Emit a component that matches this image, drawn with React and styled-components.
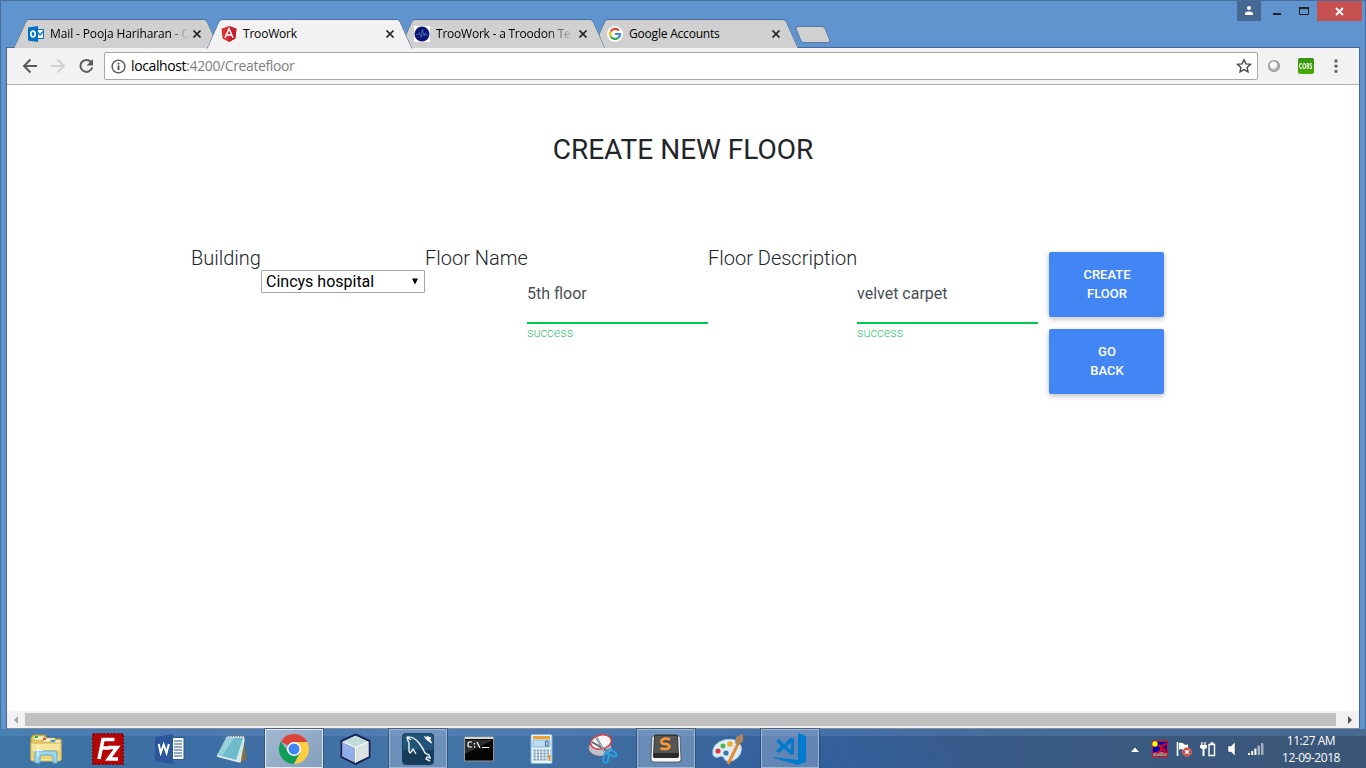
import React from 'react';
import styled, { createGlobalStyle, css } from 'styled-components';

const GlobalStyle = createGlobalStyle`
  * { box-sizing: border-box; }
  body { margin: 0; overflow: hidden; }
  svg { display: block; flex: none; }
`;

const uiFont = css`font-family: "Open Sans", "Noto Sans", sans-serif;`;

const Desktop = styled.div`
  width: 1366px;
  height: 768px;
  display: flex;
  flex-direction: column;
  overflow: hidden;
`;

const Window = styled.div`
  height: 729px;
  flex: none;
  display: flex;
  flex-direction: column;
  background: #6094cf;
  border: 1px solid #456f9f;
  border-bottom: 0;
`;

const TitleBar = styled.header`
  height: 46px;
  display: flex;
  justify-content: space-between;
  align-items: flex-start;
  padding: 0 3px 0 13px;
`;

const TabStrip = styled.div`
  display: flex;
  padding-top: 18px;
`;

const TabBox = styled.div`
  position: relative;
  z-index: ${p => p.$level};
  width: 205px;
  height: 29px;
  margin-right: -12px;
  padding: 1px 17px 0 14px;
  display: flex;
  align-items: center;
  ${uiFont}
  font-size: 12px;
  color: #000;
  &::before, &::after {
    content: "";
    position: absolute;
    z-index: -1;
    top: 0;
    height: ${p => (p.$active ? 29 : 28)}px;
    background: ${p => (p.$active ? '#f2f2f2' : '#d0d0d0')};
    border-top: 1px solid #4b6f99;
  }
  &::before {
    left: 6px;
    width: 100px;
    transform: skewX(-24deg);
    border-left: 1px solid #5b7595;
    border-top-left-radius: 3px;
  }
  &::after {
    right: 6px;
    width: 110px;
    transform: skewX(24deg);
    border-right: 1px solid #5b7595;
    border-top-right-radius: 3px;
  }
`;

const TabTitle = styled.span`
  flex: 1;
  margin-left: 6px;
  height: 18px;
  line-height: 18px;
  white-space: nowrap;
  letter-spacing: ${p => p.$tracking}px;
  ${p => p.$fade && css`mask-image: linear-gradient(90deg, #000 ${p.$fade[0]}px, transparent ${p.$fade[1]}px);`}
`;

const NewTab = styled.div`
  width: 30px;
  height: 17px;
  margin: 7px 0 0 12px;
  background: #d0d0d0;
  border: 1px solid #587aa3;
  border-radius: 3px;
  transform: skewX(22deg);
`;

const WindowControls = styled.div`
  display: flex;
  height: 20px;
`;

const Control = styled.div`
  width: ${p => p.$width}px;
  height: 20px;
  display: flex;
  align-items: center;
  justify-content: center;
  background: ${p => p.$fill || 'transparent'};
`;

const CloseControl = styled(Control)`
  margin-left: 2px;
`;

const Client = styled.div`
  flex: 1;
  margin: 0 5px;
  display: flex;
  flex-direction: column;
  background: #fff;
  border: 1px solid #44688f;
  border-bottom-color: #7f8f9f;
`;

const Toolbar = styled.div`
  height: 37px;
  flex: none;
  display: flex;
  align-items: center;
  background: #f2f2f2;
  border-bottom: 1px solid #b4b4b4;
  padding: 0 12px 0 13px;
`;

const NavButtons = styled.div`
  display: flex;
  gap: 4px;
  width: 84px;
`;

const AddressBar = styled.div`
  width: 1154px;
  flex: none;
  height: 28px;
  display: flex;
  align-items: center;
  padding: 0 5px 0 6px;
  background: #fff;
  border: 1px solid #a8a8a8;
  border-radius: 2px;
`;

const Url = styled.span`
  flex: 1;
  margin-left: 5px;
  ${uiFont}
  font-size: 14px;
  letter-spacing: -0.38px;
  line-height: 20px;
  color: #808080;
  b { font-weight: 400; color: #000; }
`;

const Extensions = styled.div`
  flex: 1;
  display: flex;
  align-items: center;
  margin-left: 9px;
`;

const Page = styled.main`
  flex: 1;
  display: flex;
  flex-direction: column;
  font-family: Roboto, sans-serif;
  color: #212529;
`;

const Heading = styled.h1`
  margin: 48px 0 0;
  font-size: 28px;
  line-height: 34px;
  font-weight: 400;
  text-align: center;
  color: #212529;
`;

const Form = styled.div`
  display: flex;
  align-items: flex-start;
  margin: 79px 0 0 184px;
`;

const Label = styled.label`
  width: ${p => p.$width}px;
  font-size: 20px;
  font-weight: 300;
  line-height: 24px;
  white-space: nowrap;
`;

const Select = styled.div`
  width: 164px;
  height: 23px;
  margin-top: 24px;
  padding: 0 5px 0 4px;
  display: flex;
  align-items: center;
  justify-content: space-between;
  border: 1px solid #a6a6a6;
  border-radius: 1px;
  color: #000;
  font-size: 16px;
`;

const Field = styled.div`
  width: 181px;
  padding-top: 36px;
`;

const Value = styled.div`
  height: 42px;
  border-bottom: 2px solid #00c851;
  font-size: 16px;
  line-height: 23px;
  color: #495057;
`;

const Hint = styled.div`
  font-size: 12.8px;
  line-height: 18px;
  font-weight: 300;
  color: #39c672;
`;

const Actions = styled.div`
  display: flex;
  flex-direction: column;
  gap: 12px;
  margin: 6px 0 0 11px;
`;

const Button = styled.button`
  width: 115px;
  height: 65px;
  padding: 0 25px 2px 26px;
  border: 0;
  border-radius: 2px;
  background: #4285f4;
  color: #fff;
  font: 500 13px/19px Roboto, sans-serif;
  text-transform: uppercase;
  box-shadow: 0 2px 5px rgba(0, 0, 0, 0.16), 0 2px 6px rgba(0, 0, 0, 0.12);
`;

const ScrollBar = styled.div`
  height: 17px;
  flex: none;
  display: flex;
  align-items: center;
  background: #f1f1f1;
  padding: 0 6px;
`;

const Thumb = styled.div`
  width: 1311px;
  height: 13px;
  flex: none;
  margin: 0 12px 0 7px;
  background: #c1c1c1;
`;

const Taskbar = styled.footer`
  flex: 1;
  display: flex;
  justify-content: space-between;
  background:
    linear-gradient(180deg, rgba(105, 150, 205, 0.3) 0 7px, transparent 7px),
    radial-gradient(ellipse 170px 38px at 810px 30px, rgba(46, 96, 160, 0.6), transparent),
    linear-gradient(90deg, #3d76a6 0, #3c6da4 180px, #4473a6 420px, #3d6b9f 650px, #365f97 820px, #385b8b 940px, #3a5a80 1120px, #3a5576 1366px);
`;

const Apps = styled.div`
  display: flex;
  gap: 4px;
  padding-left: 17px;
`;

const TaskButton = styled.div`
  width: 58px;
  height: 39px;
  display: flex;
  align-items: center;
  justify-content: center;
  border: 1px solid ${p => (p.$state === 'active' ? '#e4ebf3' : p.$state === 'open' ? '#9db6d2' : 'transparent')};
  outline: ${p => (p.$state ? '1px solid rgba(35,62,97,.55)' : 'none')};
  background: ${p => (p.$state === 'active' ? 'linear-gradient(135deg,#a3b8d0,#849fbf)' : p.$state === 'open' ? 'rgba(165,185,215,.42)' : 'none')};
`;

const Tray = styled.div`
  display: flex;
  align-items: center;
  gap: 8px;
  padding: 1px 25px 0 0;
`;

const TrayArrow = styled.span`
  margin-right: 5px;
`;

const Clock = styled.div`
  width: 60px;
  margin-left: 9px;
  ${uiFont}
  font-size: 12px;
  line-height: 17px;
  letter-spacing: -0.48px;
  text-align: center;
  white-space: nowrap;
  color: #fff;
`;

const Svg = ({ w = 16, h = w, children }) => (
  <svg width={w} height={h} viewBox={`0 0 ${w} ${h}`} fill="none">{children}</svg>
);

const OutlookIcon = () => (
  <Svg>
    <path d="M8 3.5h7.5v9H8z" fill="#fff" stroke="#0072c6" />
    <path d="M9 6l3 3 4-4.5" stroke="#0072c6" strokeWidth="1.4" />
    <path d="M0 1.5L10 0v16L0 14.5z" fill="#0072c6" />
    <ellipse cx="5" cy="8" rx="2.2" ry="2.9" stroke="#fff" strokeWidth="1.6" />
  </Svg>
);

const AngularIcon = () => (
  <Svg>
    <path d="M8 0l7.5 2.7-1.1 9.9L8 16l-6.4-3.4L.5 2.7z" fill="#dd3036" />
    <path d="M8 0l7.5 2.7-1.1 9.9L8 16z" fill="#c3212d" />
    <path d="M4 11.7L8 2.6l4 9.1M5.5 9h5" stroke="#fff" strokeWidth="1.5" />
  </Svg>
);

const PulseIcon = () => (
  <Svg>
    <path d="M0 0h16v16H0z" fill="#fff" />
    <circle cx="8" cy="8" r="7.5" fill="#0a1378" />
    <path d="M2 8.5h2.5l1-2 1.5 5 1.5-8 1.5 6.5 1-3 1 2h2" stroke="#5078b4" strokeWidth=".8" />
  </Svg>
);

const GoogleIcon = () => (
  <Svg>
    <circle cx="8" cy="8" r="8" fill="#fff" />
    <path d="M11.8 4.6A5 5 0 0 0 3.7 5.5" stroke="#ea4335" strokeWidth="2.2" />
    <path d="M3.7 5.5a5 5 0 0 0 0 5" stroke="#fbbc05" strokeWidth="2.2" />
    <path d="M3.7 10.5a5 5 0 0 0 7.6 1.3" stroke="#34a853" strokeWidth="2.2" />
    <path d="M8 8h5a5 5 0 0 1-1.7 3.8" stroke="#4285f4" strokeWidth="2.2" />
  </Svg>
);

const CloseIcon = () => (
  <Svg w={10}><path d="M1.5 1.5l7 7M8.5 1.5l-7 7" stroke="#1c1c1c" strokeWidth="1.7" /></Svg>
);

const tabs = [
  { title: 'Mail - Pooja Hariharan - O', Icon: OutlookIcon, level: 1, fade: [120, 138], tracking: -0.12 },
  { title: 'TrooWork', Icon: AngularIcon, level: 4, active: true, tracking: -0.2 },
  { title: 'TrooWork - a Troodon Te', Icon: PulseIcon, level: 3, fade: [110, 138], tracking: -0.22 },
  { title: 'Google Accounts', Icon: GoogleIcon, level: 2, tracking: -0.2 },
];

const ExplorerIcon = () => (
  <Svg w={32}>
    <path d="M1 5l2-3h12l2 4h14v21H1z" fill="#e5c85c" stroke="#b99a37" />
    <path d="M4 3h10v4H4zM13 5h12v4H13zM20 7h11v3H20z" fill="#fff7cf" stroke="#c7ac55" strokeWidth=".6" />
    <path d="M5 3h3v2H5z" fill="#18b83a" /><path d="M13 5h3v2h-3z" fill="#e5462d" /><path d="M21 7h4v2h-4z" fill="#2a9adf" />
    <path d="M1 10h30v17l-2 1H3l-2-1z" fill="#f6e59a" stroke="#d3b85d" />
    <path d="M2 17h28v9H2z" fill="#ecd275" />
    <path d="M5 30V20q0-2 2-2h18q2 0 2 2v10h-4v-6q0-2-2-2h-9q-2 0-2 2v6z" fill="#9bd8f0" stroke="#64a9cf" />
    <path d="M8 12v11M3 17.5h10" stroke="#fff" strokeWidth="1" />
  </Svg>
);

const FileZillaIcon = () => (
  <Svg w={32}>
    <path d="M.8.8h30.4v30.4H.8z" fill="#b50505" stroke="#850000" strokeWidth="1.6" strokeDasharray="2 1.5" />
    <path d="M22.5 6.5H11L7 26M9.5 15H18M16.5 14.5h8.5L16.5 26h9.5" stroke="#fff" strokeWidth="3.6" />
  </Svg>
);

const WordIcon = () => (
  <Svg w={32}>
    <path d="M18 4.5h12v22H18z" fill="#fff" stroke="#2b579a" />
    <path d="M20 8h8M20 11h8M20 14h8M20 17h8M20 20h8M20 23h8" stroke="#2b579a" strokeWidth="1.2" />
    <path d="M1 4l18-3v30L1 28z" fill="#2b579a" />
    <path d="M4.7 11l2 9 3-8.5 2.8 8.5 2.4-9" stroke="#fff" strokeWidth="2" />
  </Svg>
);

const NotepadIcon = () => (
  <Svg w={32}>
    <path d="M27 4l4 22-7 4z" fill="#80704b" />
    <path d="M11 3h17l-4 26L1 23z" fill="#cce8ed" />
    <path d="M11 5h16l-7 22L1 22z" fill="#70bbc9" />
    <path d="M11 5h7L6 23l-5-1z" fill="#a7dae0" opacity=".7" />
    <path d="M1 23l19 5 4 1 4-22-1-4" stroke="#e3eced" strokeWidth="1.3" />
    <path d="M11 2.5h17" stroke="#6b7d88" strokeWidth="3.5" strokeDasharray="1.2 1.2" />
  </Svg>
);

const ChromeIcon = () => (
  <Svg w={32}>
    <path d="M16 16L3 8.5A15 15 0 0 1 29.2 9H16z" fill="#db4437" />
    <path d="M16 16l6.5 3L16 31A15 15 0 0 1 3 8.5L10 19z" fill="#0f9d58" />
    <path d="M16 9h13.2A15 15 0 0 1 16 31l6.5-12z" fill="#ffcd40" />
    <circle cx="16" cy="16" r="7" fill="#fff" /><circle cx="16" cy="16" r="5.5" fill="#4285f4" />
  </Svg>
);

const CubeIcon = () => (
  <Svg w={32}>
    <path d="M15.5 1.5L29.5 8v16l-14 7-14-7V8z" fill="#dce6e8" stroke="#1b2153" strokeWidth="2" />
    <path d="M2.5 8.5l13 6v15l-13-6z" fill="#91aee8" /><path d="M28.5 8.5l-13 6v15l13-6z" fill="#d9e1e3" />
    <path d="M15.5 2.8L28 8.5 15.5 14 3 8.5z" fill="#c0ddda" />
    <path d="M3 9l12.5 5.5V30M28 9l-12.5 5.5" stroke="#fff" />
  </Svg>
);

const MysqlIcon = () => (
  <Svg w={32}>
    <rect x=".5" y=".5" width="31" height="31" rx="3" fill="#225378" stroke="#18405f" />
    <path d="M1 17h30v11q0 3-3 3H4q-3 0-3-3z" fill="#173c59" />
    <path d="M5 4q6-1 12 6 4 5 6 10l4 2 1 3-3-1-1 2 4 2M5 4q0 2 2 6v8q1 3 2 1l2-3 3 5M5 4l4 3" stroke="#e9f2f5" strokeWidth="1.4" />
    <path d="M22.5 3.5l2 3 5 3.5-2-4 1.5-1-4-1.5-.5 1.5z" fill="#fff" stroke="#fff" />
  </Svg>
);

const ConsoleIcon = () => (
  <Svg w={32}>
    <path d="M.5 4h29v24H.5z" fill="#050505" stroke="#969696" />
    <path d="M1 4h28v2H1z" fill="#d6d6d6" /><path d="M1 7h28L1 21z" fill="#2d2d2d" />
    <path d="M8 9H5l-1 1v3l1 1h3M10.5 10v1.5M10.5 13v1.5M13 9l3 6M18 14.5h7" stroke="#fff" strokeWidth="1.2" />
  </Svg>
);

const CalculatorIcon = () => (
  <Svg w={32}>
    <rect x="5" y="1.5" width="21" height="29" rx="1" fill="#e6f4fb" stroke="#7ab5dd" />
    <path d="M7 3h17v3H7z" fill="#f3a32b" /><path d="M7 7h17v7H7z" fill="#b9dcf1" stroke="#91b6cf" />
    <path d="M19.5 8h2.5v5h-2.5z" stroke="#476f91" />
    <g stroke="#7899ad" strokeWidth="2" strokeDasharray="2.2 1.1">
      <path d="M7.5 17.5h17M7.5 20.5h17M7.5 23.5h17M7.5 26.5h14" />
    </g>
    <path d="M23.5 22v6" stroke="#eb971d" strokeWidth="2" />
  </Svg>
);

const SnipIcon = () => (
  <Svg w={32}>
    <ellipse cx="12" cy="15" rx="11" ry="7.5" fill="#bdc4ce" stroke="#d79e9e" />
    <ellipse cx="13" cy="9" rx="10.5" ry="7" transform="rotate(-12 13 9)" fill="#f5f7f7" stroke="#dc3f42" strokeWidth="1.5" />
    <path d="M8 4l10 17M4 9l17 10" stroke="#5a6873" strokeWidth="2" /><path d="M8 4l10 17" stroke="#c6d0d5" />
    <ellipse cx="18" cy="25" rx="2.4" ry="5" transform="rotate(12 18 25)" stroke="#25a1e2" strokeWidth="2" />
    <ellipse cx="24" cy="20" rx="2.4" ry="5" transform="rotate(-52 24 20)" stroke="#25a1e2" strokeWidth="2" />
  </Svg>
);

const SublimeIcon = () => (
  <Svg w={32}>
    <path d="M2 4q0-1 2-1h24q2 0 2 1l1 22q0 3-3 3H4q-3 0-3-3z" fill="#f6f6f6" stroke="#3c3c3c" strokeWidth=".7" />
    <path d="M4 3q0-1.5 2-1.5h20q2 0 2 1.5l1 19q0 3-2 3H5q-2 0-2-3z" fill="#343434" />
    <path d="M5 3h22l1 17H4z" fill="#555" /><path d="M4 20h24l1 3q-1 2-2 2H5q-2 0-2-2z" fill="#2a2a2a" />
    <path d="M20 6.5q-5-2-7.5 0t0 4l5.500 1q3 2 0 4-3 1-7.500 0" stroke="#ff9933" strokeWidth="2.500" />
  </Svg>
);

const PaintIcon = () => (
  <Svg w={32}>
    <path d="M1 22Q-1 11 12 7q13-3 17 6 2 9-7 14-5 3-9 0-1-4-4-4-6 3-8-1z" fill="#ddeef6" stroke="#a7cde3" />
    <circle cx="6" cy="18" r="2.6" fill="#dc3c3c" /><circle cx="11" cy="13" r="2.5" fill="#52b64c" />
    <circle cx="18" cy="11" r="2.8" fill="#f5aa2f" /><circle cx="14" cy="20" r="2.6" fill="#3976a8" />
    <path d="M27 9L16 31" stroke="#e98b2d" strokeWidth="3" /><path d="M24 4l7-3v7l-5 5-3-3z" fill="#af835a" />
  </Svg>
);

const CodeIcon = () => (
  <Svg w={32}>
    <path d="M24 0l8 3v26l-8 3L0 25v-1l24 3z" fill="#007acc" />
    <path d="M2 8l3-2 5 5 7-6.500 3 1.500v15l-3 1-7-6.500-5 4.500-3-2 5-5zm15 1.500l-4.500 4 4.500 4z" fill="#007acc" fillRule="evenodd" />
  </Svg>
);

const apps = [
  [ExplorerIcon], [FileZillaIcon], [WordIcon], [NotepadIcon], [ChromeIcon, 'active'], [CubeIcon],
  [MysqlIcon, 'open'], [ConsoleIcon], [CalculatorIcon], [SnipIcon], [SublimeIcon, 'open'], [PaintIcon], [CodeIcon, 'open'],
];

const CorsBadge = styled.span`
  width: 16px;
  height: 16px;
  margin: 0 8px 0 17px;
  flex: none;
  border-radius: 2px;
  background: linear-gradient(#309510, #4bab05);
  display: flex;
  align-items: center;
  justify-content: center;
`;

const CorsText = styled.span`
  font: 700 8px/16px "Open Sans", sans-serif;
  color: #fff;
  transform: scaleX(0.62);
`;

export default function App() {
  return (
    <Desktop>
      <GlobalStyle />
      <Window>
        <TitleBar>
          <TabStrip>
            {tabs.map(({ title, Icon, level, active, fade, tracking }) => (
              <TabBox key={title} $level={level} $active={active}>
                <Icon />
                <TabTitle $fade={fade} $tracking={tracking}>{title}</TabTitle>
                <CloseIcon />
              </TabBox>
            ))}
            <NewTab />
          </TabStrip>
          <WindowControls>
            <Control $width={24} $fill="#44688f">
              <Svg w={10}><path d="M3 2a2 2 0 0 1 4 0 2 2 0 0 1-4 0M1 9V7.500Q1 5.500 5 5.500t4 2V9z" fill="#fff" /></Svg>
            </Control>
            <Control $width={32}><Svg w={10}><path d="M1 7h8v2H1z" fill="#222" /></Svg></Control>
            <Control $width={22}><Svg w={10} h={8}><path d="M.5 1h9v6.5h-9z" stroke="#222" /><path d="M0 1h10" stroke="#222" strokeWidth="2" /></Svg></Control>
            <CloseControl $width={45} $fill="#c75050"><Svg w={9}><path d="M1 1l7 7M8 1L1 8" stroke="#fff" strokeWidth="1.8" /></Svg></CloseControl>
          </WindowControls>
        </TitleBar>
        <Client>
          <Toolbar>
            <NavButtons>
              <Svg w={24}><path d="M17 12H4.500M10.500 5.500L4 12l6.500 6.500" stroke="#5a5a5a" strokeWidth="2" /></Svg>
              <Svg w={24}><path d="M3 12h12.5M9.5 5.5L16 12l-6.5 6.5" stroke="#d2d2d2" strokeWidth="2" /></Svg>
              <Svg w={24}><path d="M15 8a6 6 0 1 0 1.2 5.5" stroke="#5a5a5a" strokeWidth="2" /><path d="M17 5v6.500h-6.500z" fill="#5a5a5a" /></Svg>
            </NavButtons>
            <AddressBar>
              <Svg w={15}><circle cx="7.5" cy="7.5" r="6.4" stroke="#555" strokeWidth="1.4" /><path d="M7.5 6.5v4.5M7.5 3.7v1.7" stroke="#444" strokeWidth="1.8" /></Svg>
              <Url><b>localhost</b>:4200/Createfloor</Url>
              <Svg><path d="M8 1.8l1.9 4.1 4.5.5-3.3 3 .9 4.4L8 11.6l-4 2.2.9-4.4-3.3-3 4.500-.5z" stroke="#4a4a4a" strokeWidth="1.4" /></Svg>
            </AddressBar>
            <Extensions>
              <Svg w={14}><circle cx="7" cy="7" r="5.300" fill="#bdbdbd" stroke="#989898" strokeWidth="1.500" /><circle cx="6.300" cy="6" r="3.600" fill="#fafafa" /></Svg>
              <CorsBadge><CorsText>CORS</CorsText></CorsBadge>
              <Svg w={20} h={18}><path d="M12.600 2.600h2.800v2.800h-2.800zM12.600 7.800h2.800v2.800h-2.800zM12.600 13h2.800v2.800h-2.800z" fill="#5a5a5a" /></Svg>
            </Extensions>
          </Toolbar>
          <Page>
            <Heading>CREATE NEW FLOOR</Heading>
            <Form>
              <Label $width={70}>Building</Label>
              <Select>Cincys hospital<Svg w={8}><path d="M1 .5h6L4 6.500z" fill="#000" /></Svg></Select>
              <Label $width={102}>Floor Name</Label>
              <Field><Value>5th floor</Value><Hint>success</Hint></Field>
              <Label $width={149}>Floor Description</Label>
              <Field><Value>velvet carpet</Value><Hint>success</Hint></Field>
              <Actions>
                <Button>Create Floor</Button>
                <Button>Go<br />Back</Button>
              </Actions>
            </Form>
          </Page>
          <ScrollBar>
            <Svg w={5} h={8}><path d="M5 0v8L1 4z" fill="#a3a3a3" /></Svg>
            <Thumb />
            <Svg w={5} h={8}><path d="M0 0v8l4-4z" fill="#505050" /></Svg>
          </ScrollBar>
        </Client>
      </Window>
      <Taskbar>
        <Apps>
          {apps.map(([Icon, state], i) => <TaskButton key={i} $state={state}><Icon /></TaskButton>)}
        </Apps>
        <Tray>
          <TrayArrow><Svg w={8} h={5}><path d="M0 5l4-4.500L8 5z" fill="#fff" /></Svg></TrayArrow>
          <Svg><path d="M.5.5h15v15H.5z" fill="#0000b8" stroke="#f00" /><path d="M1 12q7-3 14 0v3H1z" fill="#888" /><circle cx="3" cy="3" r="2.700" fill="#ff0" /><path d="M14 2.500l-4 3-4-1M10 5l-2 5.500-4 2M9 8l4 1-1 4" stroke="#f00" strokeWidth="1.900" /></Svg>
          <Svg><path d="M1.5 1v14" stroke="#fff" strokeWidth="1.6" /><path d="M3 2q3-1 5 1t4 0v7q-3 1-5-1T3 9z" fill="#fff" /><circle cx="11" cy="11" r="4.400" fill="#df3b35" stroke="#d99" strokeWidth=".6" /><path d="M9 9l4 4M13 9l-4 4" stroke="#fff" strokeWidth="1.6" /></Svg>
          <Svg><path d="M2 1v3M5 1v3" stroke="#fff" strokeWidth="1.3" /><path d="M0 4h7v3L4.500 8v7h-2V8L0 7z" fill="#fff" /><path d="M9 3.500h5.500v11H9zM10.500 2h3" stroke="#fff" strokeWidth="1.4" /></Svg>
          <Svg><path d="M4 5h3l4-4v14l-4-4H4z" fill="#fff" stroke="#35495f" strokeWidth=".5" /></Svg>
          <Svg><path d="M0 12h2v2H0zM3.200 10h2v4h-2zM6.400 7.500h2V14h-2z" fill="#fff" /><path d="M10 5h1.500v8.500H10zM13.500 2.500H15v11h-1.500z" fill="#91a0b1" stroke="#b8c2ce" strokeWidth=".8" /></Svg>
          <Clock>11:27 AM<br />12-09-2018</Clock>
        </Tray>
      </Taskbar>
    </Desktop>
  );
}
